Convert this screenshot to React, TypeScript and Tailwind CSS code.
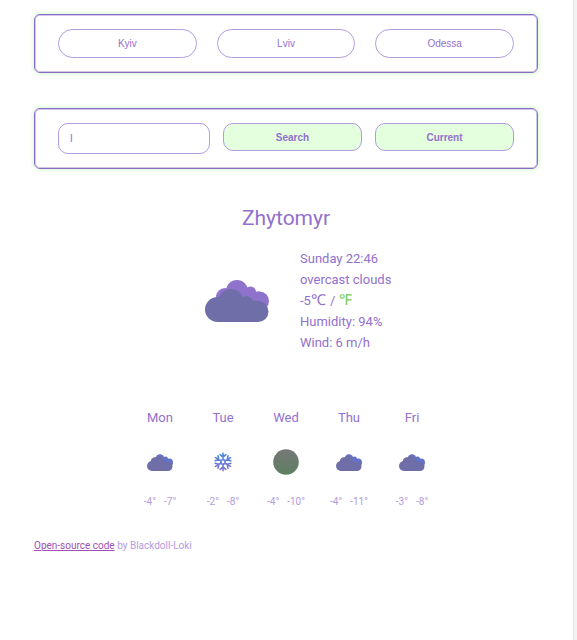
import { useState } from "react";
import type { ReactNode } from "react";

const cities = ["Kyiv", "Lviv", "Odessa"];

type Day = { name: string; icon: "clouds" | "snow" | "clear"; high: number; low: number };

const forecast: Day[] = [
  { name: "Mon", icon: "clouds", high: -4, low: -7 },
  { name: "Tue", icon: "snow", high: -2, low: -8 },
  { name: "Wed", icon: "clear", high: -4, low: -10 },
  { name: "Thu", icon: "clouds", high: -4, low: -11 },
  { name: "Fri", icon: "clouds", high: -3, low: -8 },
];

function Clouds({ back, className }: { back: string; className: string }) {
  return (
    <svg viewBox="0 0 64 42" className={className} aria-hidden="true">
      <g fill={back}>
        <circle cx="20" cy="17" r="9" />
        <circle cx="32" cy="11" r="11" />
        <circle cx="45.500" cy="12" r="5.500" />
        <circle cx="54.500" cy="21" r="9.500" />
        <path d="M20 12h25l10-.500v18H20z" />
      </g>
      <g fill="#706ea8">
        <circle cx="12.500" cy="29.500" r="12.500" />
        <circle cx="26" cy="21.500" r="12.500" />
        <circle cx="41.500" cy="22" r="6" />
        <circle cx="53" cy="31.500" r="10.500" />
        <path d="M12 20h29l12 1v21H12z" />
      </g>
    </svg>
  );
}

function SmallClouds() {
  return (
    <svg viewBox="0 0 26 17" className="h-[17px] w-[26px]" aria-hidden="true">
      <g fill="#6472c8">
        <circle cx="13" cy="4.500" r="4.300" />
        <circle cx="18.500" cy="5" r="2.500" />
        <circle cx="22" cy="8.500" r="4" />
        <path d="M13 2.500 19 4l3 4v5h-9z" />
      </g>
      <g fill="#706ea8">
        <circle cx="5" cy="12" r="5" />
        <circle cx="8" cy="7.500" r="4.200" />
        <circle cx="12" cy="6.500" r="4.500" />
        <circle cx="21" cy="12.500" r="4.500" />
        <path d="M5 7 12 3l6 5 3 .500V17H5z" />
      </g>
    </svg>
  );
}

function Snow() {
  return (
    <svg viewBox="0 0 20 20" className="size-5" fill="none" strokeWidth="1.600" strokeLinecap="round" aria-hidden="true">
      <defs>
        <linearGradient id="frost" x1="0" y1="0" x2="0" y2="20" gradientUnits="userSpaceOnUse">
          <stop offset="0" stopColor="#3f8ade" />
          <stop offset="1" stopColor="#8972cf" />
        </linearGradient>
        <mask id="flake" maskUnits="userSpaceOnUse" x="0" y="0" width="20" height="20">
          <g stroke="white">
            <circle cx="10" cy="10" r="2.200" />
            {[0, 60, 120, 180, 240, 300].map((angle) => (
              <path key={angle} d="M10 7.500V1.300M7.200 2.600 10 5.200l2.800-2.600" transform={`rotate(${angle} 10 10)`} />
            ))}
          </g>
        </mask>
      </defs>
      <rect width="20" height="20" fill="url(#frost)" mask="url(#flake)" />
    </svg>
  );
}

function Clear() {
  return (
    <svg viewBox="0 0 26 26" className="size-[26px]" aria-hidden="true">
      <defs>
        <linearGradient id="moon" x1="0" y1="0" x2="0" y2="1">
          <stop offset="0" stopColor="#777779" />
          <stop offset="1" stopColor="#5d8060" />
        </linearGradient>
      </defs>
      <circle cx="13" cy="13" r="12.800" fill="url(#moon)" />
    </svg>
  );
}

function DayIcon({ icon }: { icon: Day["icon"] }) {
  if (icon === "snow") return <Snow />;
  if (icon === "clear") return <Clear />;
  return <SmallClouds />;
}

function Panel({ children }: { children: ReactNode }) {
  return (
    <div className="rounded-md border border-[#8a6acb] px-[23px] py-3.5 shadow-[inset_0_0_0_1px_#d3c6ec,0_0_4px_1px_#d3fbc9]">
      {children}
    </div>
  );
}

export default function App() {
  const [query, setQuery] = useState("I");

  return (
    <div className="flex min-h-screen bg-white font-['Roboto',sans-serif] text-[#9270cd]">
      <main className="min-w-0 flex-1 pt-3.5 pr-[35px] pl-[34px]">
        <Panel>
          <nav className="grid grid-cols-3 gap-5 font-['Liberation_Sans',sans-serif]">
            {cities.map((city) => (
              <button key={city} type="button" className="h-[29px] rounded-full border border-[#b39bdf] text-[10px]">
                {city}
              </button>
            ))}
          </nav>
        </Panel>

        <div className="mt-[35px]">
          <Panel>
            <form
              onSubmit={(event) => event.preventDefault()}
              className="grid grid-cols-[152fr_139fr_139fr] items-start gap-[13px] font-['Liberation_Sans',sans-serif] text-[10px]"
            >
              <input
                type="text"
                aria-label="City"
                value={query}
                onChange={(event) => setQuery(event.target.value)}
                className="h-[31px] min-w-0 rounded-[10px] border border-[#b39bdf] px-[11px] outline-none"
              />
              <button type="submit" className="h-7 rounded-[10px] border border-[#b39bdf] bg-[#e3ffdd] font-bold">
                Search
              </button>
              <button type="button" className="h-7 rounded-[10px] border border-[#b39bdf] bg-[#e3ffdd] font-bold">
                Current
              </button>
            </form>
          </Panel>
        </div>

        <h1 className="mt-[33px] text-center text-[21px] leading-8">Zhytomyr</h1>

        <section className="mt-3.5 grid grid-cols-2">
          <div className="flex items-center justify-end pr-[17px]">
            <Clouds back="#8e72cb" className="h-[42px] w-16" />
          </div>
          <ul className="pl-3.5 text-[13px] leading-[21px]">
            <li>Sunday 22:46</li>
            <li>overcast clouds</li>
            <li className="flex gap-1">
              <span>
                -5<a href="#celsius" className="text-[15px]">℃</a>
              </span>
              <span>/</span>
              <a href="#fahrenheit" className="text-[15px] text-[#74cb50]">℉</a>
            </li>
            <li>Humidity: 94%</li>
            <li>Wind: 6 m/h</li>
          </ul>
        </section>

        <section className="mt-[54px] flex justify-center">
          {forecast.map((day) => (
            <div key={day.name} className="flex w-[63px] flex-col items-center">
              <h2 className="text-[13px] leading-[21px]">{day.name}</h2>
              <div className="mt-4 flex h-9 items-center">
                <DayIcon icon={day.icon} />
              </div>
              <p className="mt-3 flex gap-2 text-[10px] leading-5 text-[#b39be0]">
                <span>{day.high}°</span>
                <span>{day.low}°</span>
              </p>
            </div>
          ))}
        </section>

        <footer className="mt-[25px] text-[10px] leading-[18px] text-[#b39be0]">
          <a href="#source" className="text-[#a04fb5] underline">
            Open-source code
          </a>{" "}
          by Blackdoll-Loki
        </footer>
      </main>
      <div className="w-1 shrink-0 border-l border-[#e2e2e2] bg-[#f3f3f3]" />
    </div>
  );
}
